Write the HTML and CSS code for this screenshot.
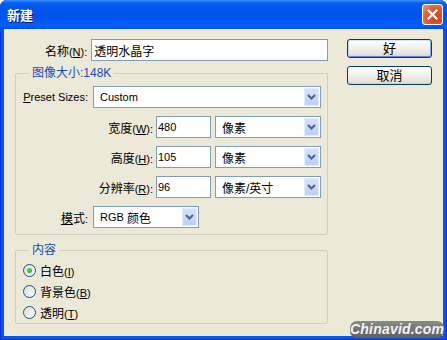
FILE: index.html
```html
<!DOCTYPE html>
<html lang="zh">
<head>
  <meta charset="UTF-8">
  <title>新建</title>
  <link rel="stylesheet" href="styles.css">
</head>
<body>
  <div class="window">
    <div class="titlebar">
      <span class="title">新建</span>
      <span class="close">
        <svg width="11" height="11" viewBox="0 0 11 11"><path d="M1.5 1.5 L9.5 9.5 M9.5 1.5 L1.5 9.5" stroke="#fff" stroke-width="2.2" stroke-linecap="square"/></svg>
      </span>
    </div>

    <div class="client">
      <div class="main">
        <div class="row name-row">
          <label class="lbl lbl-name">名称<span class="key">(<u>N</u>):</span></label>
          <input class="field field-name" type="text" value="透明水晶字">
        </div>

        <fieldset class="group size-group">
          <legend>图像大小<span class="key">:148K</span></legend>
          <div class="rows">
            <div class="row">
              <label class="lbl lbl-short latin"><u>P</u>reset Sizes:</label>
              <div class="combo combo-wide"><span class="latin">Custom</span><i class="drop"><svg width="9" height="6" viewBox="0 0 9 6"><path d="M1 1 L4.5 4.5 L8 1" fill="none" stroke="#4D6185" stroke-width="2"/></svg></i></div>
            </div>
            <div class="row">
              <label class="lbl lbl-long">宽度<span class="key">(<u>W</u>):</span></label>
              <input class="field field-num latin" type="text" value="480">
              <div class="combo combo-unit"><span>像素</span><i class="drop"><svg width="9" height="6" viewBox="0 0 9 6"><path d="M1 1 L4.5 4.5 L8 1" fill="none" stroke="#4D6185" stroke-width="2"/></svg></i></div>
            </div>
            <div class="row">
              <label class="lbl lbl-long">高度<span class="key">(<u>H</u>):</span></label>
              <input class="field field-num latin" type="text" value="105">
              <div class="combo combo-unit"><span>像素</span><i class="drop"><svg width="9" height="6" viewBox="0 0 9 6"><path d="M1 1 L4.5 4.5 L8 1" fill="none" stroke="#4D6185" stroke-width="2"/></svg></i></div>
            </div>
            <div class="row">
              <label class="lbl lbl-long">分辨率<span class="key">(<u>R</u>):</span></label>
              <input class="field field-num latin" type="text" value="96">
              <div class="combo combo-unit"><span>像素/英寸</span><i class="drop"><svg width="9" height="6" viewBox="0 0 9 6"><path d="M1 1 L4.5 4.5 L8 1" fill="none" stroke="#4D6185" stroke-width="2"/></svg></i></div>
            </div>
            <div class="row">
              <label class="lbl lbl-short"><u>模</u>式<span class="key">:</span></label>
              <div class="combo combo-unit"><span><span class="latin">RGB&nbsp;</span>颜色</span><i class="drop"><svg width="9" height="6" viewBox="0 0 9 6"><path d="M1 1 L4.5 4.5 L8 1" fill="none" stroke="#4D6185" stroke-width="2"/></svg></i></div>
            </div>
          </div>
        </fieldset>

        <fieldset class="group content-group">
          <legend>内容</legend>
          <div class="radios">
            <label class="radio-row"><span class="radio checked"></span><span>白色<span class="key">(<u>I</u>)</span></span></label>
            <label class="radio-row"><span class="radio"></span><span>背景色<span class="key">(<u>B</u>)</span></span></label>
            <label class="radio-row"><span class="radio"></span><span>透明<span class="key">(<u>T</u>)</span></span></label>
          </div>
        </fieldset>
      </div>

      <div class="buttons">
        <button class="btn btn-default">好</button>
        <button class="btn">取消</button>
      </div>
    </div>

    <div class="watermark">Chinavid.com</div>
  </div>
</body>
</html>
```

FILE: styles.css
```css
body { margin: 0; background: #fff; font-family: "Liberation Sans", "Noto Sans CJK SC", sans-serif; font-size: 12px; color: #000; }

.window { position: relative; width: 447px; height: 340px; display: flex; flex-direction: column; background: #0A55E6; border-radius: 7px 7px 0 0; box-shadow: inset 0 0 0 1px #0831D9; box-sizing: border-box; }

.titlebar { height: 29px; flex: none; display: flex; align-items: center; justify-content: space-between; padding: 0 4px 0 7px; border-radius: 7px 7px 0 0;
  background: linear-gradient(#3A93FF 0, #0A5FF0 3px, #0058EE 8px, #0053EA 18px, #0061F8 25px, #0050DD 29px); }
.title { color: #fff; font-family: "Noto Sans CJK SC", sans-serif; font-weight: bold; font-size: 13px; text-shadow: 1px 1px #0A1883; }
.close { width: 21px; height: 21px; box-sizing: border-box; border: 1px solid #fff; border-radius: 3px; display: flex; align-items: center; justify-content: center;
  background: radial-gradient(circle at 70% 70%, #C8401F, #DE6140 60%, #EE9B80); }

.client { flex: 1; margin: 0 4px 4px; background: #ECE9D8; display: flex; padding: 10px 0 0 11px; }
.main { width: 313px; }

.key { font-family: "Liberation Sans", sans-serif; font-size: 11px; }
.latin { font-family: "Liberation Sans", sans-serif; font-size: 11px; }

.row { display: flex; align-items: center; height: 22px; }
.lbl { text-align: right; white-space: nowrap; }
.lbl-name { width: 73px; margin-right: 4px; }
.lbl-short { width: 72px; margin-right: 5px; }
.lbl-long { width: 137px; margin-right: 3px; }

.field { height: 22px; box-sizing: border-box; border: 1px solid #7F9DB9; background: #fff; padding: 0 2px; font: inherit; outline: none; }
.field-name { width: 239px; }
.field-num { width: 55px; margin-right: 4px; padding-left: 1px; font-size: 11px; }

.combo { height: 22px; box-sizing: border-box; border: 1px solid #7F9DB9; background: #fff; display: flex; align-items: stretch; padding: 1px 1px 1px 6px; }
.combo > span { flex: 1; display: flex; align-items: center; }
.combo-wide { width: 228px; }
.combo-unit { width: 106px; }
.drop { width: 15px; display: flex; align-items: center; justify-content: center; border-radius: 1px; background: linear-gradient(#D6E3FD, #B9CFFA); box-shadow: inset 0 0 0 1px #E4ECFD; }

.group { margin: 0; padding: 0; border: 1px solid #D0D0BF; border-radius: 2px; }
.group legend { margin-left: 13px; padding: 0 3px; line-height: 15px; color: #1A4BB8; }
.group legend .key { font-size: 12px; }
.size-group { margin-top: 5px; }
.rows { padding: 5px 0 6px; display: flex; flex-direction: column; gap: 8px; }
.content-group { margin-top: 8px; }
.radios { padding: 2px 0 0 7px; }
.radio-row { height: 21px; display: flex; align-items: center; gap: 4px; }
.radio { width: 13px; height: 13px; box-sizing: border-box; border-radius: 50%; border: 1px solid #1C5180; background: linear-gradient(135deg, #DCDCD7, #fff); display: flex; align-items: center; justify-content: center; }
.radio.checked::after { content: ""; width: 5px; height: 5px; border-radius: 50%; background: radial-gradient(circle at 40% 40%, #5ED35E, #21A121); }

.buttons { margin-left: 19px; display: flex; flex-direction: column; gap: 8px; }
.btn { width: 85px; height: 19px; padding: 0; border: 1px solid #003C74; border-radius: 3px; font: inherit; font-size: 13px; line-height: 15px;
  background: linear-gradient(#fff, #F3F2ED 40%, #E6E3D7 85%, #D6D0C5); }
.btn-default { box-shadow: inset 0 1px #CEE7FF, inset 1px 0 #BCD4F6, inset -1px 0 #89ADE4, inset 0 -1px #6982EE; }

.watermark { position: absolute; right: 3px; bottom: 2px; width: 94px; height: 17px; border-radius: 7px; background: linear-gradient(#8A8A8A, #5E5E5E);
  color: #F2F2F2; font-style: italic; font-weight: bold; font-size: 14px; line-height: 17px; text-align: center; letter-spacing: 0.2px; }
```
